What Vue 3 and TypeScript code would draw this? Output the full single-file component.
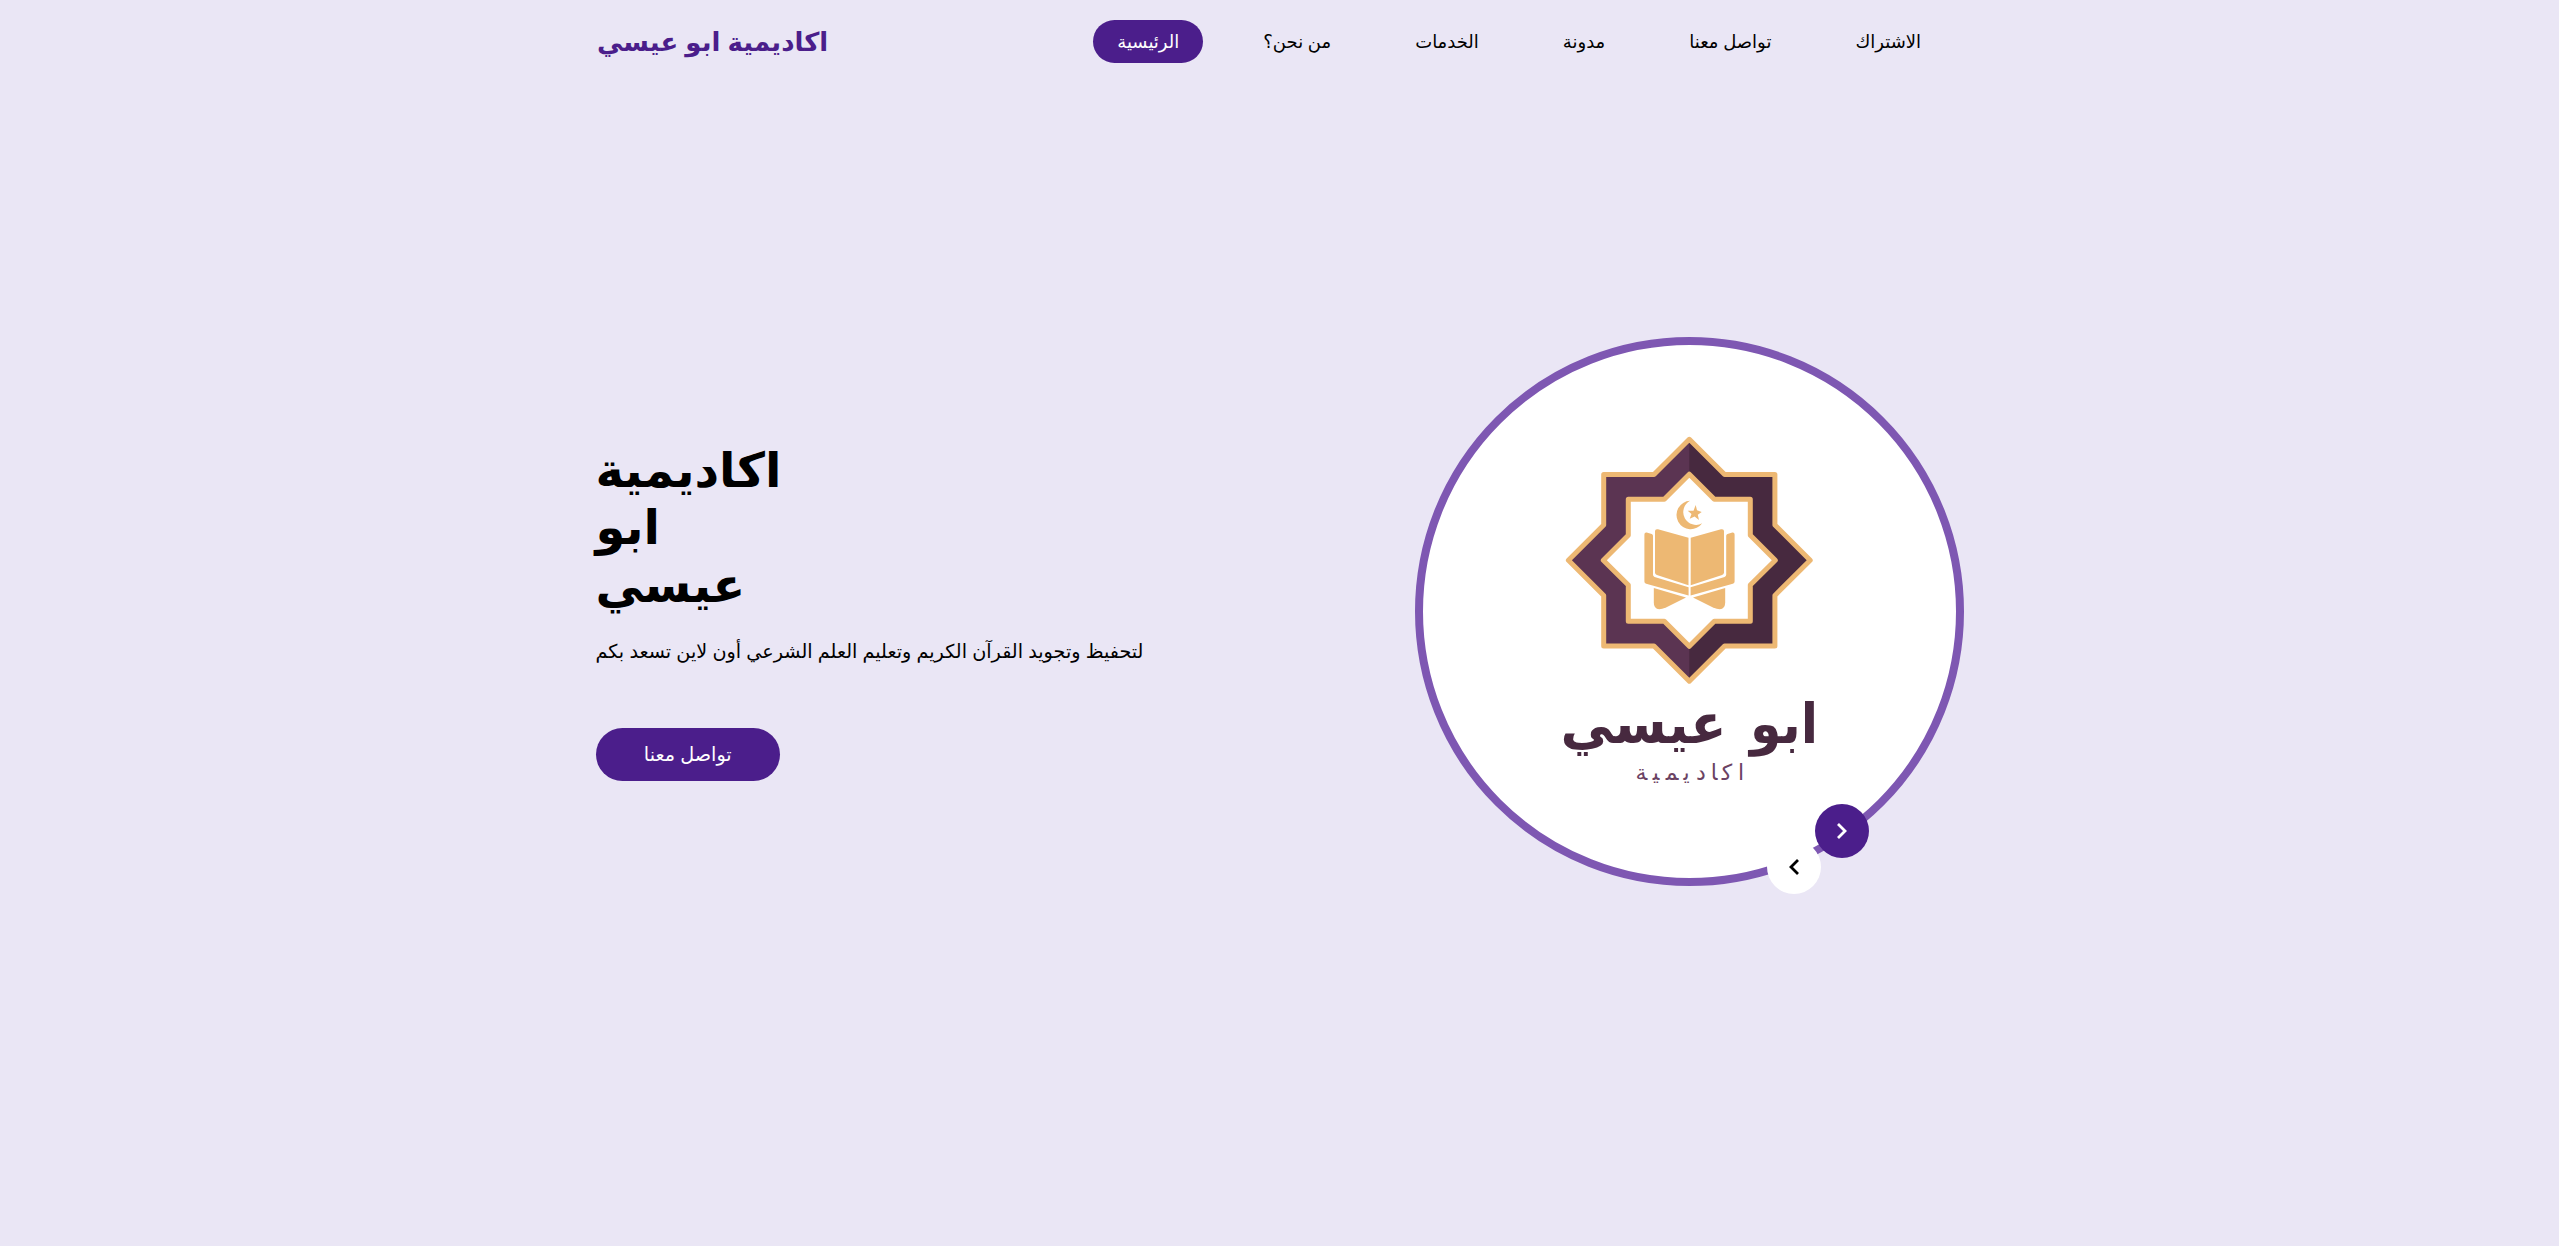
<script setup lang="ts">
interface Letter { x: number; glyph: string }

const links: string[] = ['الرئيسية', 'من نحن؟', 'الخدمات', 'مدونة', 'تواصل معنا', 'الاشتراك']
const title: string[] = ['اكاديمية', 'ابو', 'عيسي']

// Widely tracked caption: joiners keep each letter in its connected form.
const caption: Letter[] = [
  { x: 1741, glyph: 'ا' },
  { x: 1727, glyph: 'ك\u200d' },
  { x: 1714, glyph: '\u200dا' },
  { x: 1701, glyph: 'د' },
  { x: 1686.5, glyph: 'ي\u200d' },
  { x: 1672, glyph: '\u200dم\u200d' },
  { x: 1656, glyph: '\u200dي\u200d' },
  { x: 1641.5, glyph: '\u200dة' },
]
</script>

<template>
  <div class="page">
    <header class="bar">
      <a class="brand">اكاديمية ابو عيسي</a>
      <nav class="nav">
        <a v-for="(l, i) in links" :key="l" class="link" :class="{ active: i === 0 }"><span>{{ l }}</span></a>
      </nav>
    </header>
    <main class="hero">
      <section class="copy">
        <h1 class="title"><span v-for="w in title" :key="w">{{ w }}</span></h1>
        <p class="lead">لتحفيظ وتجويد القرآن الكريم وتعليم العلم الشرعي أون لاين تسعد بكم</p>
        <a class="cta">تواصل معنا</a>
      </section>
      <section class="slider">
        <div class="disc">
          <svg class="logo" viewBox="1423 345 533 533">
            <g stroke-linejoin="round">
              <path fill="#5b3452" d="M1689.300 439.300l35.300 35.200h50.300v50.500l35.300 35.200-35.300 35.200v50.600h-50.300l-35.300 35.200-35.300-35.200h-50.300v-50.600l-35.300-35.200 35.300-35.200v-50.500h50.300z" />
              <path fill="#47293f" d="M1689.300 439.300l35.300 35.200h50.300v50.500l35.300 35.200-35.300 35.200v50.600h-50.300l-35.300 35.200z" />
              <path fill="none" stroke="#edb873" stroke-width="5" d="M1689.300 439.300l35.300 35.200h50.300v50.500l35.300 35.200-35.300 35.200v50.600h-50.300l-35.300 35.200-35.300-35.200h-50.300v-50.600l-35.300-35.200 35.300-35.200v-50.500h50.300z" />
              <path fill="#fff" stroke="#edb873" stroke-width="5" d="M1689.300 474.200l25 25.100h36v36l25 24.900-25 24.900v36.100h-36l-25 25.100-25-25.100h-36v-36.100l-25-24.900 25-24.900v-36h36z" />
            </g>
            <g fill="#edb873">
              <path d="M1690 500.800A14.200 14.200 0 1 0 1702.200 523.300A12.300 12.300 0 1 1 1690 500.800z" />
              <path d="M1695.700 505l1.300 5.300 4.700 1.700-3.900 2.700 1.200 5.300-4.400-3.400-4.900 2.100 1.800-4.700-3.800-3.300 5.800.1z" />
              <path d="M1655 531q.2-2.300 3-1.700l30.500 8.500v47.400l-31.600-10.200q-1.900-.7-1.900-2.500z" />
              <path d="M1724 531q-.2-2.300-3-1.700l-30.300 8.500v47.400l31.400-10.200q1.900-.7 1.900-2.500z" />
              <path d="M1644.400 534.500q0-2.200 2.300-1.900l5 1.300q1.300.5 1.300 1.800v39q0 1.600 1.600 2.200l34 10.300v8.200l-42.400-11.700q-1.800-.6-1.800-2.300z" />
              <path d="M1734.600 534.500q0-2.200-2.300-1.900l-4.800 1.300q-1.300.5-1.300 1.800v39q0 1.600-1.600 2.200l-34 10.300v8.200l42.200-11.700q1.800-.6 1.800-2.300z" />
              <path d="M1653.800 588l32.200 9.400-20 10.100q-12.200 5-12.200-5z" />
              <path d="M1725.200 588l-32.200 9.400 20 10.100q12.200 5 12.200-5z" />
            </g>
            <text class="logo-name" x="1784" y="742.500" text-anchor="middle" textLength="68" lengthAdjust="spacingAndGlyphs">ابو</text>
            <text class="logo-name" x="1643.500" y="742.500" text-anchor="middle" textLength="166" lengthAdjust="spacingAndGlyphs">عيسي</text>
            <text v-for="c in caption" :key="c.x" class="logo-sub" :x="c.x" y="780" text-anchor="middle">{{ c.glyph }}</text>
          </svg>
          <button class="arrow prev"><svg viewBox="0 0 20 20"><path d="M14 3L7 10l7 7" /></svg></button>
          <button class="arrow next"><svg viewBox="0 0 20 20"><path d="M6 3l7 7-7 7" /></svg></button>
        </div>
      </section>
    </main>
  </div>
</template>

<style>
html, body { margin: 0; background: #fff; }
</style>

<style scoped>
.page {
  height: 1246px;
  background: #eae6f5;
  font-family: "Liberation Sans", "DejaVu Sans", sans-serif;
  color: #000;
  overflow: hidden;
}
.bar {
  width: 1368px;
  height: 83px;
  margin: 0 auto;
  display: flex;
  align-items: center;
  justify-content: space-between;
}
.brand { margin-left: 1.500px; padding-top: 2px; font-size: 26px; font-weight: 700; color: #4b1e8b; }
.nav { display: flex; gap: 36px; margin-right: 18.500px; }
.link { height: 43px; box-sizing: border-box; padding: 1px 24px 0; line-height: 43px; font-size: 18px; word-spacing: -0.300px; border-radius: 22px; white-space: nowrap; }
.link.active { background: #4b1e8b; color: #fff; }
.hero {
  width: 1368px;
  margin: 0 auto;
  padding-top: 254px;
  display: flex;
  justify-content: space-between;
}
.copy { padding-top: 104.500px; display: flex; flex-direction: column; align-items: flex-start; }
.title { margin: 0; font-size: 48px; line-height: 57.6px; font-weight: 700; }
.title span { display: block; }
.lead { margin: 24px 0 0; font-size: 19.200px; line-height: 28.800px; word-spacing: -0.150px; white-space: nowrap; }
.cta { height: 53px; box-sizing: border-box; margin-top: 61px; padding: 1px 48.300px 0; line-height: 52.800px; font-size: 19.200px; border-radius: 27px; background: #4b1e8b; color: #fff; }
.disc {
  position: relative;
  box-sizing: border-box;
  width: 549px;
  height: 549px;
  border: 8px solid #7e57b2;
  border-radius: 50%;
  background: #fff;
}
.logo { display: block; width: 533px; height: 533px; }
.logo-name { font-size: 55px; font-weight: 700; fill: #47293f; }
.logo-sub { font-size: 22px; fill: #6b4263; }
.arrow {
  position: absolute;
  width: 54px;
  height: 54px;
  padding: 0;
  border: 0;
  border-radius: 50%;
  display: flex;
  align-items: center;
  justify-content: center;
}
.arrow svg { width: 20px; height: 20px; fill: none; stroke: currentColor; stroke-width: 2.800; }
.prev { left: 344px; top: 495px; background: #fff; color: #000; }
.next { left: 392px; top: 459px; background: #4b1e8b; color: #fff; }
</style>
